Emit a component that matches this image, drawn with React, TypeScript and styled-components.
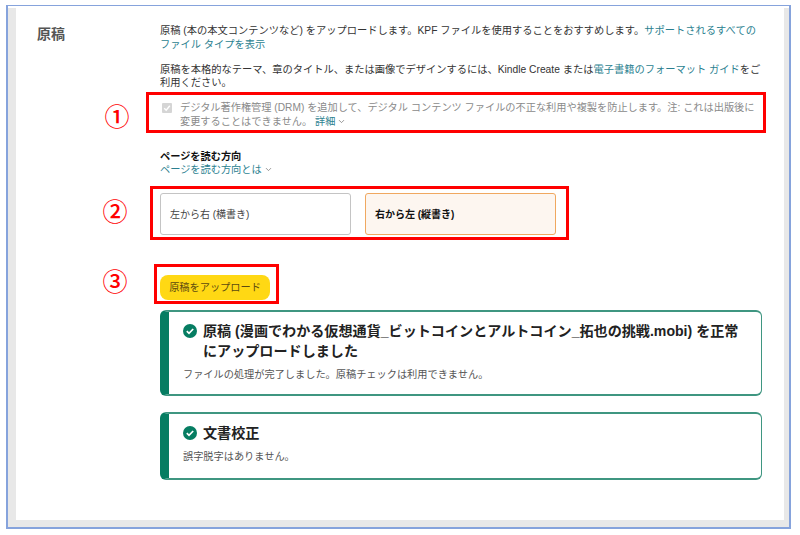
import React from "react";
import styled, { createGlobalStyle } from "styled-components";
import { ChevronDown } from "lucide-react";

const Global = createGlobalStyle`
  html, body { margin: 0; padding: 0; background: #fff; }
  body { font-family: "Liberation Sans", "Noto Sans CJK JP", sans-serif; color: #333; }
  #root { width: 800px; height: 535px; overflow: hidden; }
`;

const Frame = styled.div`
  position: relative;
  box-sizing: border-box;
  width: 785px;
  height: 524px;
  margin: 5px 0 0 6px;
  border: 2px solid #86a3dc;
  border-width: 1px 2px 2px 2px;
  background: #e8e8e8;
  padding: 2px 5px 7px 8px;
  box-shadow: inset 0 2px 0 #fff;
`;

const Panel = styled.div`
  display: flex;
  box-sizing: border-box;
  height: 100%;
  background: #fff;
  padding: 16px 0 0 21px;
`;

const SectionLabel = styled.h2`
  width: 123px;
  margin: 0;
  flex: none;
  font-size: 14px;
  line-height: 20px;
  font-weight: 700;
  color: #555;
`;

const Content = styled.div`
  width: 602px;
  flex: none;
  display: flex;
  flex-direction: column;
`;

const Para = styled.p`
  margin: 0 0 11.5px;
  font-size: 10.25px;
  line-height: 13.5px;
  color: #333;
  white-space: nowrap;
`;

const Link = styled.a`
  color: #2b7f90;
`;

const Check = styled.label`
  display: flex;
  gap: 8px;
  margin: 0 0 21.5px;
  padding-left: 2px;
  font-size: 10.2px;
  line-height: 13.5px;
  color: #8a8a8a;
  white-space: nowrap;
`;

const CheckBox = styled.span`
  flex: none;
  width: 10px;
  height: 10px;
  margin-top: 2px;
  background: #d5d5d5;
  border-radius: 1px;
  display: flex;
  align-items: center;
  justify-content: center;
`;

const Chevron = styled(ChevronDown)`
  width: 9px;
  height: 9px;
  margin-left: 2px;
  vertical-align: -1px;
  color: #777;
`;

const Heading = styled.div`
  font-size: 10.2px;
  line-height: 13px;
  font-weight: 700;
  color: #111;
`;

const SubLink = styled.div`
  font-size: 10.2px;
  line-height: 13px;
  color: #2b7f90;
  margin-bottom: 17px;
`;

const Options = styled.div`
  display: flex;
  gap: 14px;
  margin-bottom: 40px;
`;

const Option = styled.div<{ $active?: boolean }>`
  box-sizing: border-box;
  width: 191px;
  height: 42px;
  display: flex;
  align-items: center;
  padding-left: 9px;
  font-size: 10px;
  border-radius: 3px;
  border: 1px solid ${(p) => (p.$active ? "#f0a860" : "#c4c4c4")};
  background: ${(p) => (p.$active ? "#fdf6f0" : "#fff")};
  color: ${(p) => (p.$active ? "#111" : "#444")};
  font-weight: ${(p) => (p.$active ? 700 : 400)};
`;

const UploadButton = styled.button`
  align-self: flex-start;
  width: 110px;
  height: 25px;
  margin-bottom: 10px;
  border: 0;
  border-radius: 8px;
  background: #ffd814;
  color: #5c4a10;
  font: inherit;
  font-size: 10.2px;
  line-height: 25px;
  padding: 0;
`;

const Alert = styled.div<{ $height: number }>`
  box-sizing: border-box;
  height: ${(p) => p.$height}px;
  margin-bottom: 16px;
  border: 2px solid #3f9681;
  border-right-width: 1px;
  border-left: 9px solid #067d62;
  border-radius: 6px;
  padding: 9px 14px 0 14px;
`;

const AlertTitle = styled.div`
  display: flex;
  gap: 6px;
  font-size: 14.1px;
  line-height: 20px;
  font-weight: 700;
  color: #222;
  white-space: nowrap;
`;

const CheckIcon = styled.svg`
  flex: none;
  width: 14px;
  height: 14px;
  margin-top: 3px;
`;

const AlertText = styled.div`
  margin-top: 7px;
  font-size: 10.2px;
  line-height: 14px;
  color: #555;
`;

const RedBox = styled.div<{ $x: number; $y: number; $w: number; $h: number }>`
  position: absolute;
  box-sizing: border-box;
  left: ${(p) => p.$x - 6 - 2}px;
  top: ${(p) => p.$y - 5 - 1}px;
  width: ${(p) => p.$w}px;
  height: ${(p) => p.$h}px;
  border: 3px solid #f00;
  pointer-events: none;
`;

const Marker = styled.div<{ $x: number; $y: number }>`
  position: absolute;
  left: ${(p) => p.$x - 8}px;
  top: ${(p) => p.$y - 6}px;
  width: 26px;
  height: 26px;
  display: flex;
  align-items: center;
  justify-content: center;
  font-family: "Noto Sans CJK JP", sans-serif;
  font-size: 25px;
  font-weight: 500;
  line-height: 26px;
  color: #f00;
`;

const Tick = () => (
  <CheckIcon viewBox="0 0 14 14">
    <circle cx="7" cy="7" r="7" fill="#067d62" />
    <path d="M3.8 7.2l2.2 2.2 4.2-4.4" fill="none" stroke="#fff" strokeWidth="1.7" />
  </CheckIcon>
);

export default function App() {
  return (
    <>
      <Global />
      <Frame>
        <Panel>
          <SectionLabel>原稿</SectionLabel>
          <Content>
            <Para>
              原稿 (本の本文コンテンツなど) をアップロードします。KPF ファイルを使用することをおすすめします。
              <Link>サポートされるすべての</Link>
              <br />
              <Link>ファイル タイプを表示</Link>
            </Para>
            <Para>
              原稿を本格的なテーマ、章のタイトル、または画像でデザインするには、Kindle Create または
              <Link>電子書籍のフォーマット ガイド</Link>をご
              <br />
              利用ください。
            </Para>
            <Check>
              <CheckBox>
                <svg width="8" height="8" viewBox="0 0 8 8">
                  <path d="M1.2 4.2l2 2 3.6-4.4" fill="none" stroke="#fff" strokeWidth="1.4" />
                </svg>
              </CheckBox>
              <span>
                デジタル著作権管理 (DRM) を追加して、デジタル コンテンツ ファイルの不正な利用や複製を防止します。注: これは出版後に
                <br />
                変更することはできません。 <Link>詳細</Link>
                <Chevron />
              </span>
            </Check>
            <Heading>ページを読む方向</Heading>
            <SubLink>
              ページを読む方向とは
              <Chevron />
            </SubLink>
            <Options>
              <Option>左から右 (横書き)</Option>
              <Option $active>右から左 (縦書き)</Option>
            </Options>
            <UploadButton>原稿をアップロード</UploadButton>
            <Alert $height={86}>
              <AlertTitle>
                <Tick />
                <span>
                  原稿 (漫画でわかる仮想通貨_ビットコインとアルトコイン_拓也の挑戦.mobi) を正常
                  <br />
                  にアップロードしました
                </span>
              </AlertTitle>
              <AlertText>ファイルの処理が完了しました。原稿チェックは利用できません。</AlertText>
            </Alert>
            <Alert $height={68}>
              <AlertTitle>
                <Tick />
                <span>文書校正</span>
              </AlertTitle>
              <AlertText>誤字脱字はありません。</AlertText>
            </Alert>
          </Content>
        </Panel>
        <RedBox $x={146} $y={92} $w={620} $h={41} />
        <RedBox $x={150} $y={186} $w={419} $h={54} />
        <RedBox $x={154} $y={264} $w={125} $h={40} />
        <Marker $x={104} $y={102}>①</Marker>
        <Marker $x={102} $y={197}>②</Marker>
        <Marker $x={102} $y={267}>③</Marker>
      </Frame>
    </>
  );
}
